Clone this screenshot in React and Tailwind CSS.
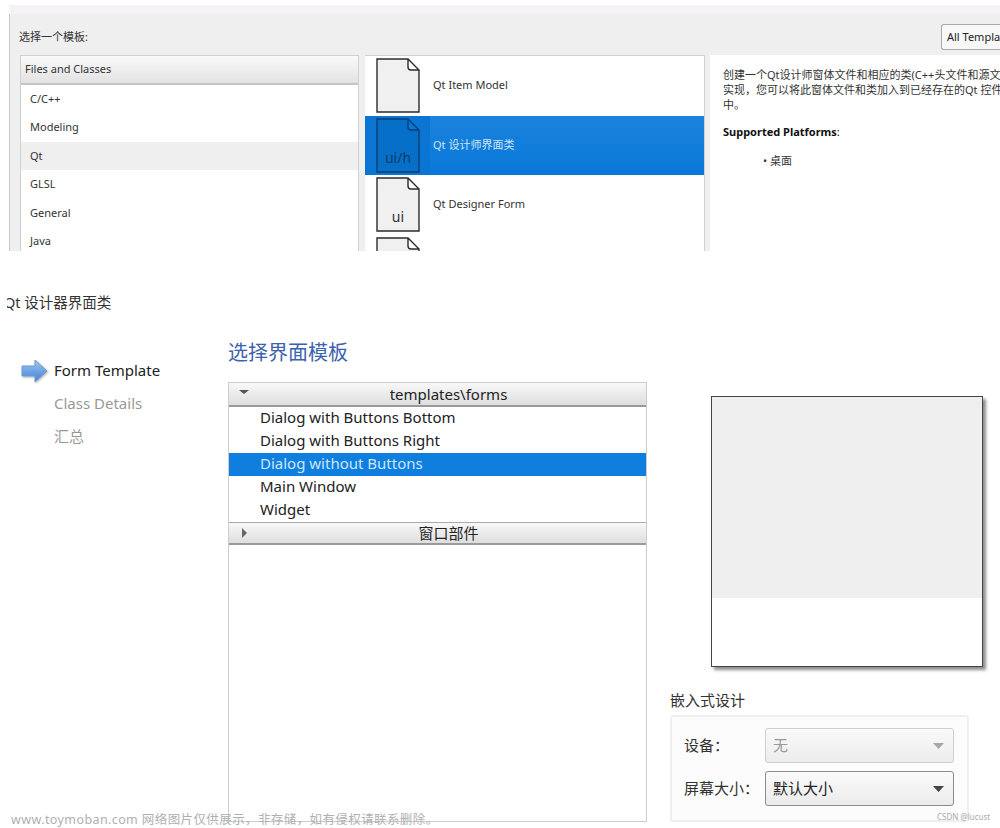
const categories = ['C/C++', 'Modeling', 'Qt', 'GLSL', 'General', 'Java']
const forms = ['Dialog with Buttons Bottom', 'Dialog with Buttons Right', 'Dialog without Buttons', 'Main Window', 'Widget']

const FileIcon = ({ label, active }) => (
  <div className="relative h-[55px] w-[44px] shrink-0">
    <svg width="44" height="55" viewBox="0 0 44 55" className="block">
      <path
        d="M1 1H32L43 12V54H1Z M32 1V9Q32 12 35 12H43"
        fill={active ? '#0670c8' : '#f0f0f0'}
        stroke={active ? '#0b3f70' : '#2b2b2b'}
        strokeWidth="1.4"
      />
    </svg>
    {label && (
      <span className={`absolute inset-x-0 bottom-[6px] text-center text-[14px] leading-[18px] ${active ? 'text-[#0c3c68]' : 'text-[#333]'}`}>
        {label}
      </span>
    )}
  </div>
)

const TemplateRow = ({ name, label, active }) => (
  <div className={`flex h-[59.5px] items-center ${active ? 'bg-linear-to-b from-[#1a83dd] to-[#0878d9] text-[#cfe5f8]' : 'text-[#333]'}`}>
    <div className={`flex h-full w-[65px] items-center justify-center pl-[1px] ${active ? 'bg-[#0a75d2]' : ''}`}>
      <FileIcon label={label} active={active} />
    </div>
    <span className={`ml-[3px] text-[11px] ${active ? '' : 'mb-[2px]'}`}>{name}</span>
  </div>
)

const Combo = ({ text, disabled }) => (
  <div className={`flex h-[35px] w-[189px] items-center justify-between rounded-[3px] border bg-linear-to-b from-[#fafafa] to-[#ececec] pl-[7px] pr-[9px] text-[15px] ${disabled ? 'border-[#cfcfcf] text-[#999]' : 'border-[#8c8c8c] text-[#222]'}`}>
    <span>{text}</span>
    <svg width="11" height="6" viewBox="0 0 11 6"><path d="M0 0H11L5.5 6Z" fill={disabled ? '#a8a8a8' : '#444'} /></svg>
  </div>
)

const SectionHead = ({ title, open, className }) => (
  <div className={`relative flex items-center justify-center border-b-2 border-[#9a9a9a] bg-linear-to-b from-[#f8f8f8] to-[#dedede] pl-[22px] text-[15px] text-[#222] ${className}`}>
    <svg width="10" height="10" viewBox="0 0 10 10" className="absolute left-[10px] top-[5px]">
      {open ? <path d="M0 2H10L5 6Z" fill="#555" /> : <path d="M3 0L8 5L3 10Z" fill="#666" />}
    </svg>
    {title}
  </div>
)

export default function App() {
  return (
    <div className="relative h-[828px] w-[1000px] overflow-hidden bg-white font-['Noto_Sans','Noto_Sans_CJK_SC',sans-serif]">
      {/* dialog 1 */}
      <div className="h-[251px] overflow-hidden pl-[9px] pt-[5px]">
        <div className="h-[9px] bg-[#f7f2f5]" />
        <div className="h-[237px] border-l border-[#c8c8c8] bg-[#efefef]">
          <div className="flex h-[41px] items-start justify-between pl-[9px]">
            <span className="mt-[14px] text-[11px] leading-[18px] text-[#333]">选择一个模板:</span>
            <div className="mt-[10px] h-[26px] w-[59px] rounded-l-[3px] border border-r-0 border-[#aaa] bg-[#f8f8f8] pl-[5px] text-[11px] leading-[24px] whitespace-nowrap text-[#222]">
              All Templates
            </div>
          </div>
          <div className="flex h-[196px] pl-[10px]">
            <div className="h-[200px] w-[339px] border border-[#d0d0d0] bg-white">
              <div className="flex h-[29px] items-center border-b-2 border-[#c4c4c4] bg-linear-to-b from-[#fafafa] to-[#e2e2e2] pl-[4px] text-[11px] text-[#333]">
                Files and Classes
              </div>
              {categories.map(c => (
                <div key={c} className={`flex h-[28.4px] items-center pl-[9px] text-[11px] text-[#333] ${c === 'Qt' ? 'bg-[#efefef]' : ''}`}>
                  {c}
                </div>
              ))}
            </div>
            <div className="ml-[6px] h-[200px] w-[340px] border-y border-r border-[#d0d0d0] bg-white">
              <TemplateRow name="Qt Item Model" />
              <TemplateRow name="Qt 设计师界面类" label="ui/h" active />
              <TemplateRow name="Qt Designer Form" label="ui" />
              <TemplateRow name="" />
            </div>
            <div className="ml-[5px] h-[200px] flex-1 overflow-hidden bg-white pl-[13px] pt-[12px] text-[11px] leading-[15px] text-[#333]">
              <p className="whitespace-nowrap">创建一个Qt设计师窗体文件和相应的类(C++头文件和源文件</p>
              <p className="whitespace-nowrap">实现，您可以将此窗体文件和类加入到已经存在的Qt 控件项目</p>
              <p>中。</p>
              <p className="mt-[12px] text-[#111]"><b>Supported Platforms</b>:</p>
              <p className="mt-[14px] pl-[40px]">• 桌面</p>
            </div>
          </div>
        </div>
      </div>

      {/* dialog 2 */}
      <div className="h-[577px]">
        <div className="ml-[7px] overflow-hidden pt-[41px]">
          <div className="ml-[-3px] text-[14.5px] leading-[20px] whitespace-nowrap text-[#333]">Qt 设计器界面类</div>
        </div>
        <div className="flex pt-[26px]">
          <div className="w-[228px] pt-[16px] text-[15px]">
            <div className="flex h-[33px] items-center pl-[21px] text-[#222]">
              <svg width="27" height="24" viewBox="0 0 27 24" className="mr-[6px] drop-shadow-[1px_1px_1px_rgba(0,0,0,0.3)]">
                <defs>
                  <linearGradient id="arrow" x1="0" y1="0" x2="0" y2="1">
                    <stop offset="0" stopColor="#a3c6f0" />
                    <stop offset="1" stopColor="#3f7fd6" />
                  </linearGradient>
                </defs>
                <path d="M1 7H14V1L26 12L14 23V17H1Z" fill="url(#arrow)" stroke="#6f9bd8" />
              </svg>
              Form Template
            </div>
            <div className="flex h-[33px] items-center pl-[54px] text-[#999]">Class Details</div>
            <div className="flex h-[33px] items-center pl-[54px] text-[#999]">汇总</div>
          </div>
          <div className="w-[419px]">
            <h2 className="h-[44px] text-[20px] leading-[30px] font-normal text-[#3a62ad]">选择界面模板</h2>
            <div className="h-[440px] border border-[#cdcdcd]">
              <SectionHead title="templates\forms" open className="h-[24px]" />
              {forms.map(f => (
                <div key={f} className={`h-[23px] pl-[31px] text-[15px] leading-[21px] ${f === 'Dialog without Buttons' ? 'bg-[#0f7fdf] text-[#cfe5f8]' : 'text-[#222]'}`}>
                  {f}
                </div>
              ))}
              <SectionHead title="窗口部件" className="h-[23px] border-t border-t-[#aaa]" />
            </div>
          </div>
          <div className="ml-[23px] w-[330px] pt-[58px]">
            <div className="ml-[41px] h-[271px] w-[272px] border border-[#444] bg-white shadow-[3px_3px_3px_rgba(0,0,0,0.45)]">
              <div className="h-[201px] bg-[#efefef]" />
            </div>
            <div className="mt-[22px] text-[15px] leading-[22px] text-[#333]">嵌入式设计</div>
            <div className="mt-[4px] h-[107px] w-[299px] rounded-[3px] border-2 border-[#efefef] bg-[#fcfcfc] pl-[12px] pt-[11px]">
              <div className="flex items-center">
                <span className="w-[81px] text-[15px] text-[#333]">设备：</span>
                <Combo text="无" disabled />
              </div>
              <div className="mt-[8px] flex items-center">
                <span className="w-[81px] text-[15px] whitespace-nowrap text-[#333]">屏幕大小：</span>
                <Combo text="默认大小" />
              </div>
            </div>
          </div>
        </div>
      </div>

      {/* watermarks */}
      <div className="absolute left-[11px] top-[810px] text-[12.5px] leading-[19px] tracking-[0.4px] whitespace-nowrap text-[#b0b0b0]">
        www.toymoban.com 网络图片仅供展示，非存储，如有侵权请联系删除。
      </div>
      <div className="absolute left-[937px] top-[811px] text-[8px] leading-[12px] text-[#aaa]">CSDN @lucust</div>
    </div>
  )
}
